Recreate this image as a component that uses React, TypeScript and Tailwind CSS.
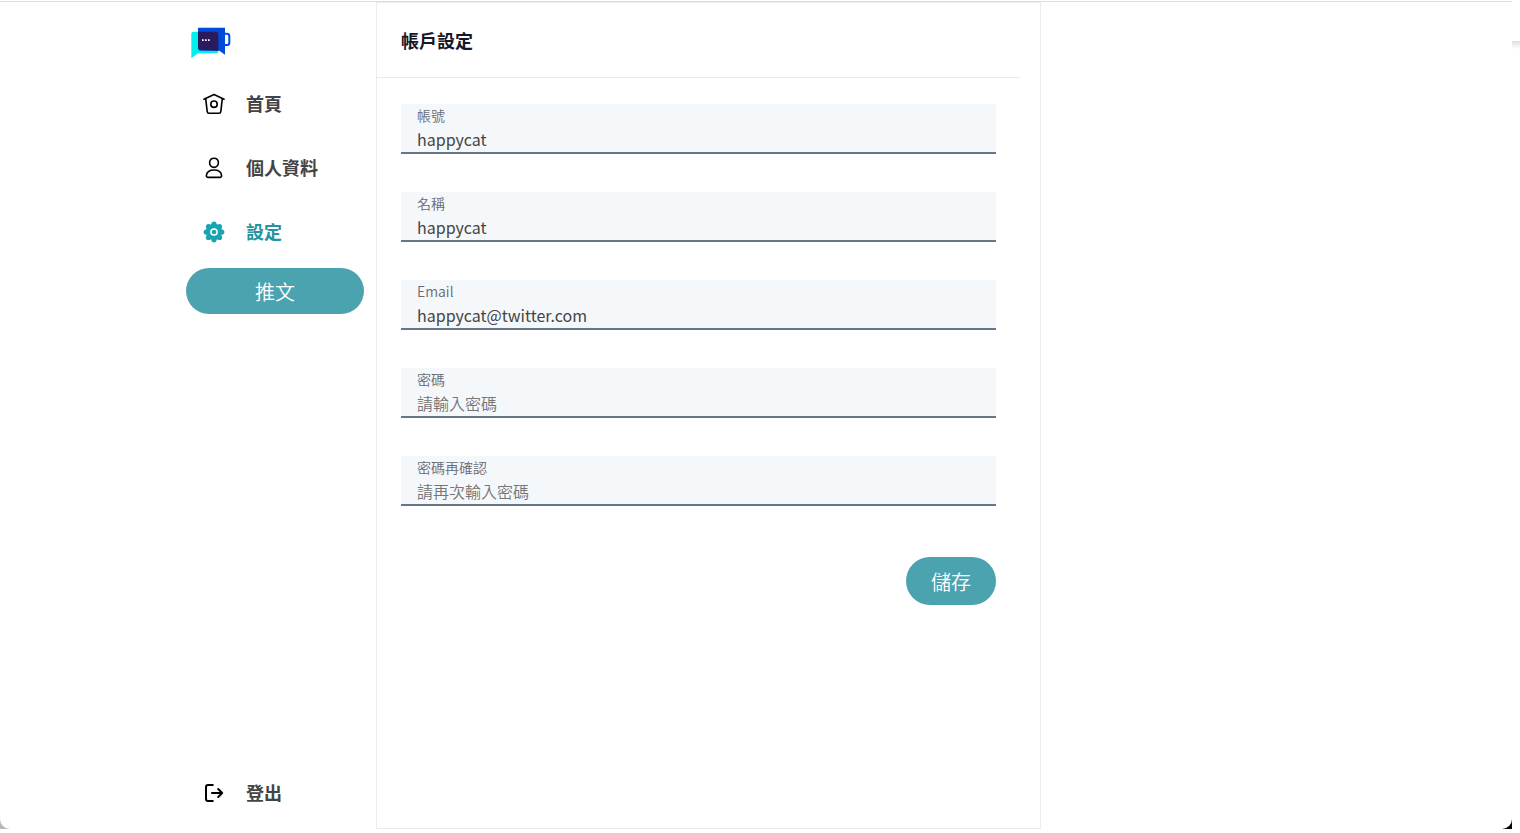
import type { ReactNode } from "react";

type NavItemProps = {
  label: string;
  icon: ReactNode;
  active?: boolean;
};

type FieldProps = {
  id: string;
  label: string;
  type?: string;
  defaultValue?: string;
  placeholder?: string;
};

function Logo() {
  return (
    <svg viewBox="30 30 123 99" className="ml-1 h-[33px] w-[41px]" role="img" aria-label="Logo">
      <path d="M42 47H107Q115 47 115 55V104Q115 112 107 112H54L34 127V54Q34 47 42 47Z" fill="#00eeee" />
      <path d="M54 35H135V116L118 104H62Q54 104 54 96Z" fill="#004bdb" />
      <path d="M54 47H107Q115 47 115 55V104L64 102Q54 102 54 92Z" fill="#2a1a5e" />
      <path d="M135 53H140Q148 53 148 60V80Q148 87 140 87H135" fill="none" stroke="#004bdb" strokeWidth="6" />
      <path d="M66 70h5v5h-5zM75 70h5v5h-5zM84 70h5v5h-5z" fill="#fff" />
    </svg>
  );
}

function HomeIcon() {
  return (
    <svg viewBox="0 0 24 24" className="size-6" fill="none" stroke="#000" strokeWidth="1.6" strokeLinecap="round" strokeLinejoin="round" aria-hidden="true">
      <path d="M1.9 7.2L12 2.6L22.1 7.2M3.7 6.6L5.2 19.6Q5.4 21.3 7 21.3H17Q18.6 21.3 18.8 19.6L20.3 6.6" />
      <circle cx="12" cy="12.2" r="3.2" />
    </svg>
  );
}

function UserIcon() {
  return (
    <svg viewBox="0 0 24 24" className="size-6" fill="none" stroke="#000" strokeWidth="1.6" strokeLinejoin="round" aria-hidden="true">
      <path d="M12 2.2C9.5 2.2 7.6 4 7.6 6.5C7.6 9.3 9.5 11.4 12 11.4S16.4 9.3 16.4 6.5C16.4 4 14.5 2.2 12 2.2Z" />
      <path d="M12 14C8 14 4.9 16 4.4 19.3C4.2 20.6 4.9 21.4 6.2 21.4H17.8C19.1 21.4 19.8 20.6 19.6 19.3C19.1 16 16 14 12 14Z" />
    </svg>
  );
}

function GearIcon() {
  return (
    <svg viewBox="0 0 24 24" className="size-6" fill="#1aa3b0" aria-hidden="true">
      <circle cx="12" cy="12" r="8.3" />
      <circle cx="12" cy="4.2" r="2.6" />
      <circle cx="17.5" cy="6.5" r="2.6" />
      <circle cx="19.8" cy="12" r="2.6" />
      <circle cx="17.5" cy="17.5" r="2.6" />
      <circle cx="12" cy="19.8" r="2.6" />
      <circle cx="6.5" cy="17.5" r="2.6" />
      <circle cx="4.2" cy="12" r="2.6" />
      <circle cx="6.5" cy="6.5" r="2.6" />
      <circle cx="12" cy="12" r="3.1" stroke="#fff" strokeWidth="1.5" />
    </svg>
  );
}

function LogoutIcon() {
  return (
    <svg viewBox="0 0 24 24" className="size-6" fill="none" stroke="#000" strokeWidth="2" strokeLinecap="round" strokeLinejoin="round" aria-hidden="true">
      <path d="M10.8 4H6Q4 4 4 6V18Q4 20 6 20H10.8" />
      <path d="M10 12H20.2M16.2 8L20.2 12L16.2 16" />
    </svg>
  );
}

function NavItem({ label, icon, active = false }: NavItemProps) {
  return (
    <a href="#" className="flex h-16 items-center gap-5 pl-4" aria-current={active ? "page" : undefined}>
      {icon}
      <span className={active ? "pb-0.5 text-lg font-bold text-[#2593a0]" : "pb-0.5 text-lg font-bold text-[#444]"}>{label}</span>
    </a>
  );
}

function Field({ id, label, type = "text", defaultValue, placeholder }: FieldProps) {
  return (
    <div className="border-b-2 border-[#657786] bg-[#f5f8fa] px-4">
      <label htmlFor={id} className="block text-sm/[22px] font-[350] text-[#696974]">
        {label}
      </label>
      <input
        id={id}
        type={type}
        defaultValue={defaultValue}
        placeholder={placeholder}
        className="block h-[26px] w-full bg-transparent text-base/6 text-[#444] outline-none placeholder:font-[350] placeholder:text-[#757575]"
      />
    </div>
  );
}

export default function App() {
  return (
    <div className="relative min-h-screen bg-white pt-px pr-2 pb-1 font-['Noto_Sans_CJK_TC',sans-serif]">
      <div className="bg-linear-to-r from-[#b8b8b8] from-50% to-black to-50%">
        <div className="min-h-[calc(100vh-5px)] rounded-b-[10px] border-t border-[#dcdee0] bg-white">
          <div className="mx-auto grid min-h-[calc(100vh-6px)] max-w-[1140px] grid-cols-[2fr_7fr_3fr]">
            <aside className="flex flex-col pt-6 pr-3 pb-1">
              <Logo />
              <nav className="mt-[13px] flex flex-col">
                <NavItem label="首頁" icon={<HomeIcon />} />
                <NavItem label="個人資料" icon={<UserIcon />} />
                <NavItem label="設定" icon={<GearIcon />} active />
              </nav>
              <button type="button" className="mt-1 h-[46px] rounded-full bg-[#4ba3b0] pt-0.5 text-xl font-[350] text-white">
                推文
              </button>
              <div className="mt-auto">
                <NavItem label="登出" icon={<LogoutIcon />} />
              </div>
            </aside>

            <main className="border border-[#e6ecf0]">
              <header className="mr-5 border-b border-[#e8eaec] py-[25px] pl-6">
                <h1 className="text-lg/6 font-bold text-[#171725]">帳戶設定</h1>
              </header>
              <form className="flex flex-col gap-[38px] pt-[26px] pr-11 pl-6">
                <Field id="account" label="帳號" defaultValue="happycat" />
                <Field id="name" label="名稱" defaultValue="happycat" />
                <Field id="email" label="Email" type="email" defaultValue="happycat@twitter.com" />
                <Field id="password" label="密碼" type="password" placeholder="請輸入密碼" />
                <Field id="password-check" label="密碼再確認" type="password" placeholder="請再次輸入密碼" />
                <button type="button" className="mt-[13px] h-12 self-end rounded-full bg-[#4ba3b0] px-[25px] pt-0.5 text-xl font-[350] text-white">
                  儲存
                </button>
              </form>
            </main>
          </div>
        </div>
      </div>
      <div className="absolute top-[41px] right-0 h-2 w-2 bg-linear-to-b from-[#dedede] to-white" />
    </div>
  );
}
